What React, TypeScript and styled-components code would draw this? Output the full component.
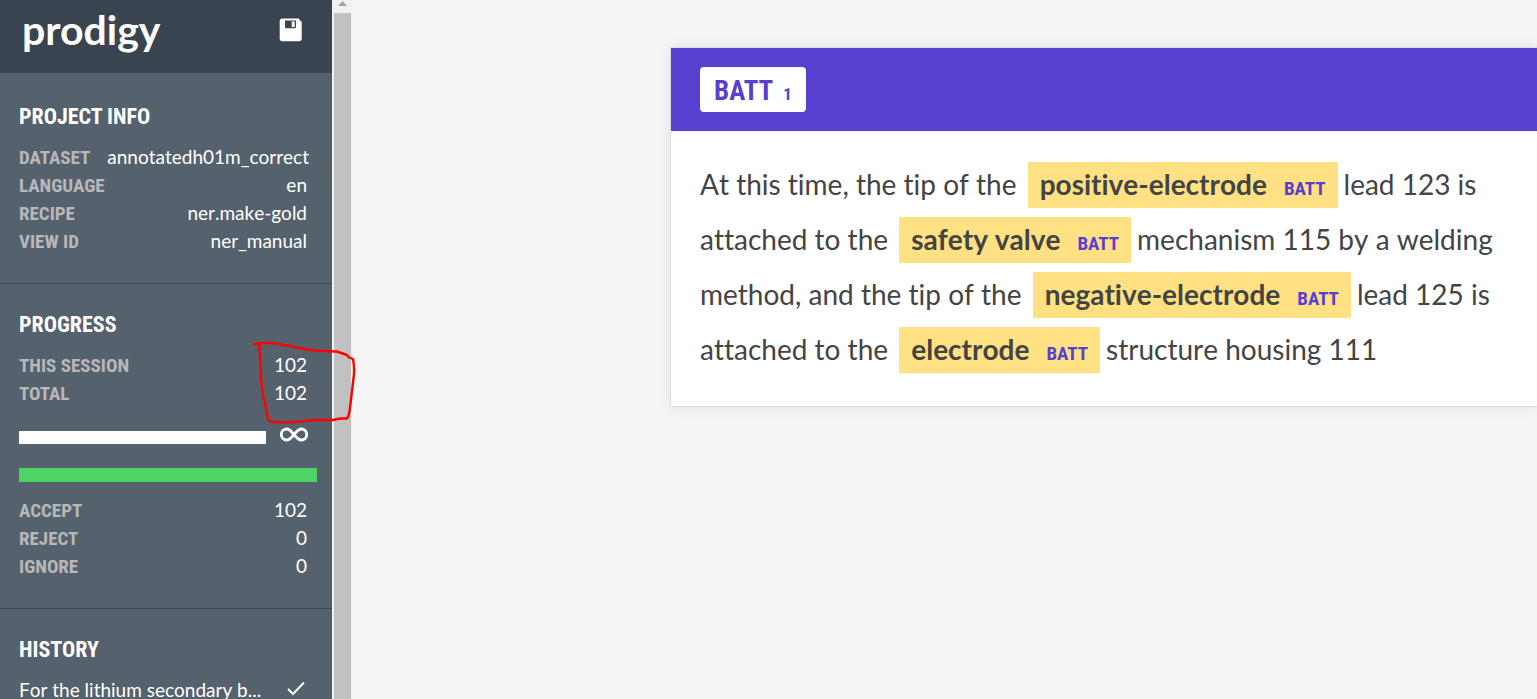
import React from 'react';
import styled, { createGlobalStyle } from 'styled-components';

const condensed = "'Roboto Condensed', 'Liberation Sans Narrow', Roboto, sans-serif";

const GlobalStyle = createGlobalStyle`
  * { box-sizing: border-box; }
  body {
    margin: 0;
    background: #f5f5f5;
    color: #444;
    font-family: Lato, sans-serif;
    font-variant-ligatures: none;
    font-kerning: none;
    overflow: hidden;
  }
`;

const Page = styled.div`
  display: flex;
  height: 100vh;
  overflow: hidden;
`;

const Sidebar = styled.aside`
  position: relative;
  flex: 0 0 332px;
  background: #56616e;
  color: #fff;
`;

const SidebarHeader = styled.header`
  display: flex;
  justify-content: space-between;
  align-items: flex-start;
  height: 73px;
  margin-bottom: 3px;
  padding: 6px 28px 0 22px;
  background: #3a4451;
`;

const Logo = styled.a`
  color: #fff;
  font: 700 41px/48px Lato, sans-serif;
  text-decoration: none;
`;

const SaveButton = styled.button`
  display: flex;
  margin: 10px 0 0;
  padding: 0;
  border: 0;
  background: none;
  color: #fff;
`;

const Section = styled.section`
  padding: 25px 15px 28px 19px;
  border-bottom: 1px solid #3a4451;
`;

const SectionTitle = styled.h2`
  margin: 0 0 10px;
  font: 700 22px/32px ${condensed};
  text-transform: uppercase;
`;

const InfoTable = styled.table`
  width: 100%;
  border-collapse: collapse;
`;

const InfoLabel = styled.th`
  height: 28px;
  padding: 2px 0 0;
  color: #b8b8b8;
  font: 700 19px/26px ${condensed};
  text-align: left;
  text-transform: uppercase;
`;

const InfoValue = styled.td<{ $wide?: boolean }>`
  padding: 0 ${(p) => (p.$wide ? 8 : 10)}px 0 0;
  font-size: 19px;
  line-height: 28px;
  text-align: right;
`;

const ProgressRow = styled.div`
  display: flex;
  align-items: flex-end;
  gap: 14px;
  margin: 20px 9px 24px 0;
`;

const Bar = styled.div<{ $color: string; $height: number }>`
  flex: 1;
  height: ${(p) => p.$height}px;
  background: ${(p) => p.$color};
`;

const AcceptBar = styled(Bar)`
  margin-bottom: 14px;
`;

const HistoryRow = styled.a`
  display: flex;
  justify-content: space-between;
  align-items: center;
  padding-right: 12px;
  color: #fff;
  font-size: 19px;
  line-height: 28px;
  text-decoration: none;
`;

const ScrollTrack = styled.div`
  flex: 0 0 21px;
  padding: 0 2px;
  background: #f1f1f1;
`;

const ScrollArrow = styled.svg`
  display: block;
  width: 17px;
  height: 13px;
`;

const ScrollThumb = styled.div`
  height: 100%;
  background: #c1c1c1;
`;

const Main = styled.main`
  flex: 1;
  min-width: 0;
  padding: 47px 0 0 317px;
`;

const Card = styled.article`
  border: 1px solid #ddd;
  border-right: 0;
  background: #fff;
  box-shadow: 0 0 14px rgba(0, 0, 0, 0.08);
`;

const CardHeader = styled.header`
  padding: 19px 29px;
  background: #583fcf;
`;

const LabelButton = styled.button`
  display: flex;
  align-items: baseline;
  gap: 10px;
  height: 45px;
  padding: 1px 14px 0;
  border: 0;
  border-radius: 4px;
  background: #fff;
  color: #583fcf;
  font: 700 27px/46px ${condensed};
`;

const Shortcut = styled.span`
  font-size: 17px;
`;

const Passage = styled.p`
  margin: 0;
  padding: 26px 29px 29px;
  font-size: 28px;
  line-height: 55px;
`;

const Entity = styled.mark`
  margin: 0 6px 0 4px;
  padding: 5px 12px 7px;
  background: #ffe184;
  color: #444;
  font-weight: 700;
`;

const EntityLabel = styled.span`
  margin-left: 17px;
  color: #583fcf;
  font: 700 19px/20px ${condensed};
`;

const Annotation = styled.svg`
  position: absolute;
  top: 340px;
  left: 250px;
  width: 108px;
  height: 88px;
  pointer-events: none;
`;

const Info = ({ rows }: { rows: [string, string][] }) => (
  <InfoTable>
    <tbody>
      {rows.map(([label, value]) => (
        <tr key={label}>
          <InfoLabel scope="row">{label}</InfoLabel>
          <InfoValue $wide={value.length > 18}>{value}</InfoValue>
        </tr>
      ))}
    </tbody>
  </InfoTable>
);

const Batt = ({ children }: { children: string }) => (
  <Entity>
    {children}
    <EntityLabel>BATT</EntityLabel>
  </Entity>
);

export default function App() {
  return (
    <>
      <GlobalStyle />
      <Page>
        <Sidebar>
          <SidebarHeader>
            <Logo href="#">prodigy</Logo>
            <SaveButton aria-label="Save">
              <svg width="26" height="28" viewBox="0 0 26 28" fill="none">
                <path
                  fill="currentColor"
                  fillRule="evenodd"
                  d="M4 2.500H20.500L23.700 6V22.500Q23.700 25.300 21 25.300H4.500Q1.700 25.300 1.700 22.500V5Q1.700 2.500 4 2.500ZM7 4.500V11Q7 12.300 8.300 12.300H16.700Q18 12.300 18 11V4.500ZM13.800 5.500H16.700V11H13.800Z"
                />
              </svg>
            </SaveButton>
          </SidebarHeader>
          <Section>
            <SectionTitle>Project info</SectionTitle>
            <Info
              rows={[
                ['Dataset', 'annotatedh01m_correct'],
                ['Language', 'en'],
                ['Recipe', 'ner.make-gold'],
                ['View ID', 'ner_manual'],
              ]}
            />
          </Section>
          <Section>
            <SectionTitle>Progress</SectionTitle>
            <Info
              rows={[
                ['This session', '102'],
                ['Total', '102'],
              ]}
            />
            <ProgressRow>
              <Bar $color="#fff" $height={13} />
              <svg width="28" height="17" viewBox="0 0 28 17" fill="none" stroke="#fff" strokeWidth="2.800">
                <path d="M14 7.500C11 4 9.500 2 6.800 2A5.400 5.400 0 0 0 6.800 13C9.500 13 11 11 14 7.500C17 4 18.500 2 21.200 2A5.400 5.400 0 0 1 21.200 13C18.500 13 17 11 14 7.500Z" />
              </svg>
            </ProgressRow>
            <AcceptBar $color="#4fd365" $height={14} />
            <Info
              rows={[
                ['Accept', '102'],
                ['Reject', '0'],
                ['Ignore', '0'],
              ]}
            />
          </Section>
          <Section>
            <SectionTitle>History</SectionTitle>
            <HistoryRow href="#">
              For the lithium secondary b...
              <svg width="18" height="16" viewBox="0 0 18 16" fill="none" stroke="#fff" strokeWidth="2">
                <path d="M1 7L6 12L17 0.500" />
              </svg>
            </HistoryRow>
          </Section>
          <Annotation viewBox="0 0 108 88" fill="none" stroke="#f00" strokeWidth="2.400" strokeLinecap="round" strokeLinejoin="round">
            <path d="M4 4.500L9 3.300Q19 2.500 29 4L57 9.500Q66 11 87 11.500L97 15L99 17.500L103 19Q104.500 26 104 34L100 68Q99 76 97 78.500H90L83 80H66L45 82L31 82.500L20 81.500L18 79L15 63L12.500 53L11 37L10 17L9 5" />
          </Annotation>
        </Sidebar>
        <ScrollTrack>
          <ScrollArrow viewBox="0 0 17 13">
            <path d="M4 6L8.500 1L13 6Z" fill="#a3a3a3" />
          </ScrollArrow>
          <ScrollThumb />
        </ScrollTrack>
        <Main>
          <Card>
            <CardHeader>
              <LabelButton>
                BATT <Shortcut>1</Shortcut>
              </LabelButton>
            </CardHeader>
            <Passage>
              At this time, the tip of the <Batt>positive-electrode</Batt>
              lead 123 is attached to the <Batt>safety valve</Batt>
              mechanism 115 by a welding method, and the tip of the <Batt>negative-electrode</Batt>
              lead 125 is attached to the <Batt>electrode</Batt>
              structure housing 111
            </Passage>
          </Card>
        </Main>
      </Page>
    </>
  );
}
